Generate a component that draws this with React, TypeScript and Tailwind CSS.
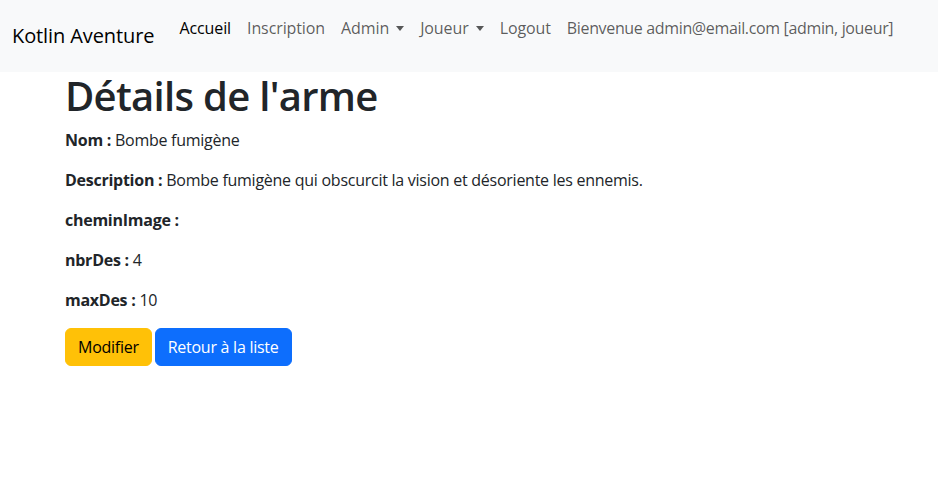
import React from "react";

const font = { fontFamily: '"Open Sans", "Noto Sans", sans-serif' };

function Caret() {
  return (
    <span className="ml-[7px] inline-block align-[3px] border-x-[4px] border-t-[5px] border-x-transparent border-t-current" />
  );
}

const links = [
  { label: "Accueil", active: true },
  { label: "Inscription" },
  { label: "Admin", dropdown: true },
  { label: "Joueur", dropdown: true },
  { label: "Logout" },
];

const details = [
  { label: "Nom :", value: "Bombe fumigène" },
  { label: "Description :", value: "Bombe fumigène qui obscurcit la vision et désoriente les ennemis." },
  { label: "cheminImage :", value: "" },
  { label: "nbrDes :", value: "4" },
  { label: "maxDes :", value: "10" },
];

export default function App() {
  return (
    <div className="min-h-screen bg-white text-[#212529] text-[16px] tracking-[-0.26px]" style={font}>
      <nav className="h-[72px] bg-[#f8f9fa] flex items-start px-3 tracking-[-0.1px]">
        <a className="mt-[21px] mr-[17px] text-[20px] leading-[30px] text-black">Kotlin Aventure</a>
        <ul className="mt-2 flex items-center">
          {links.map((l) => (
            <li key={l.label}>
              <a
                className={
                  "block px-2 py-2 leading-6 " +
                  (l.active ? "text-black" : "text-black/65")
                }
              >
                {l.label}
                {l.dropdown && <Caret />}
              </a>
            </li>
          ))}
          <li>
            <span className="block px-2 py-2 leading-6 text-black/65 tracking-[-0.35px]">
              Bienvenue admin@email.com [admin, joueur]
            </span>
          </li>
        </ul>
      </nav>

      <main className="pl-[65px]">
        <h1 className="text-[40px] leading-[48px] font-semibold tracking-[-0.7px] mb-2">Détails de l'arme</h1>
        {details.map((d) => (
          <p key={d.label} className="leading-6 mb-4">
            <strong className="font-bold">{d.label}</strong> {d.value}
          </p>
        ))}
        <div className="flex gap-[3px]">
          <button className="px-3 py-[6px] leading-6 border border-[#ffc107] bg-[#ffc107] text-black rounded-md">
            Modifier
          </button>
          <button className="px-3 py-[6px] leading-6 border border-[#0d6efd] bg-[#0d6efd] text-white rounded-md">
            Retour à la liste
          </button>
        </div>
      </main>
    </div>
  );
}
